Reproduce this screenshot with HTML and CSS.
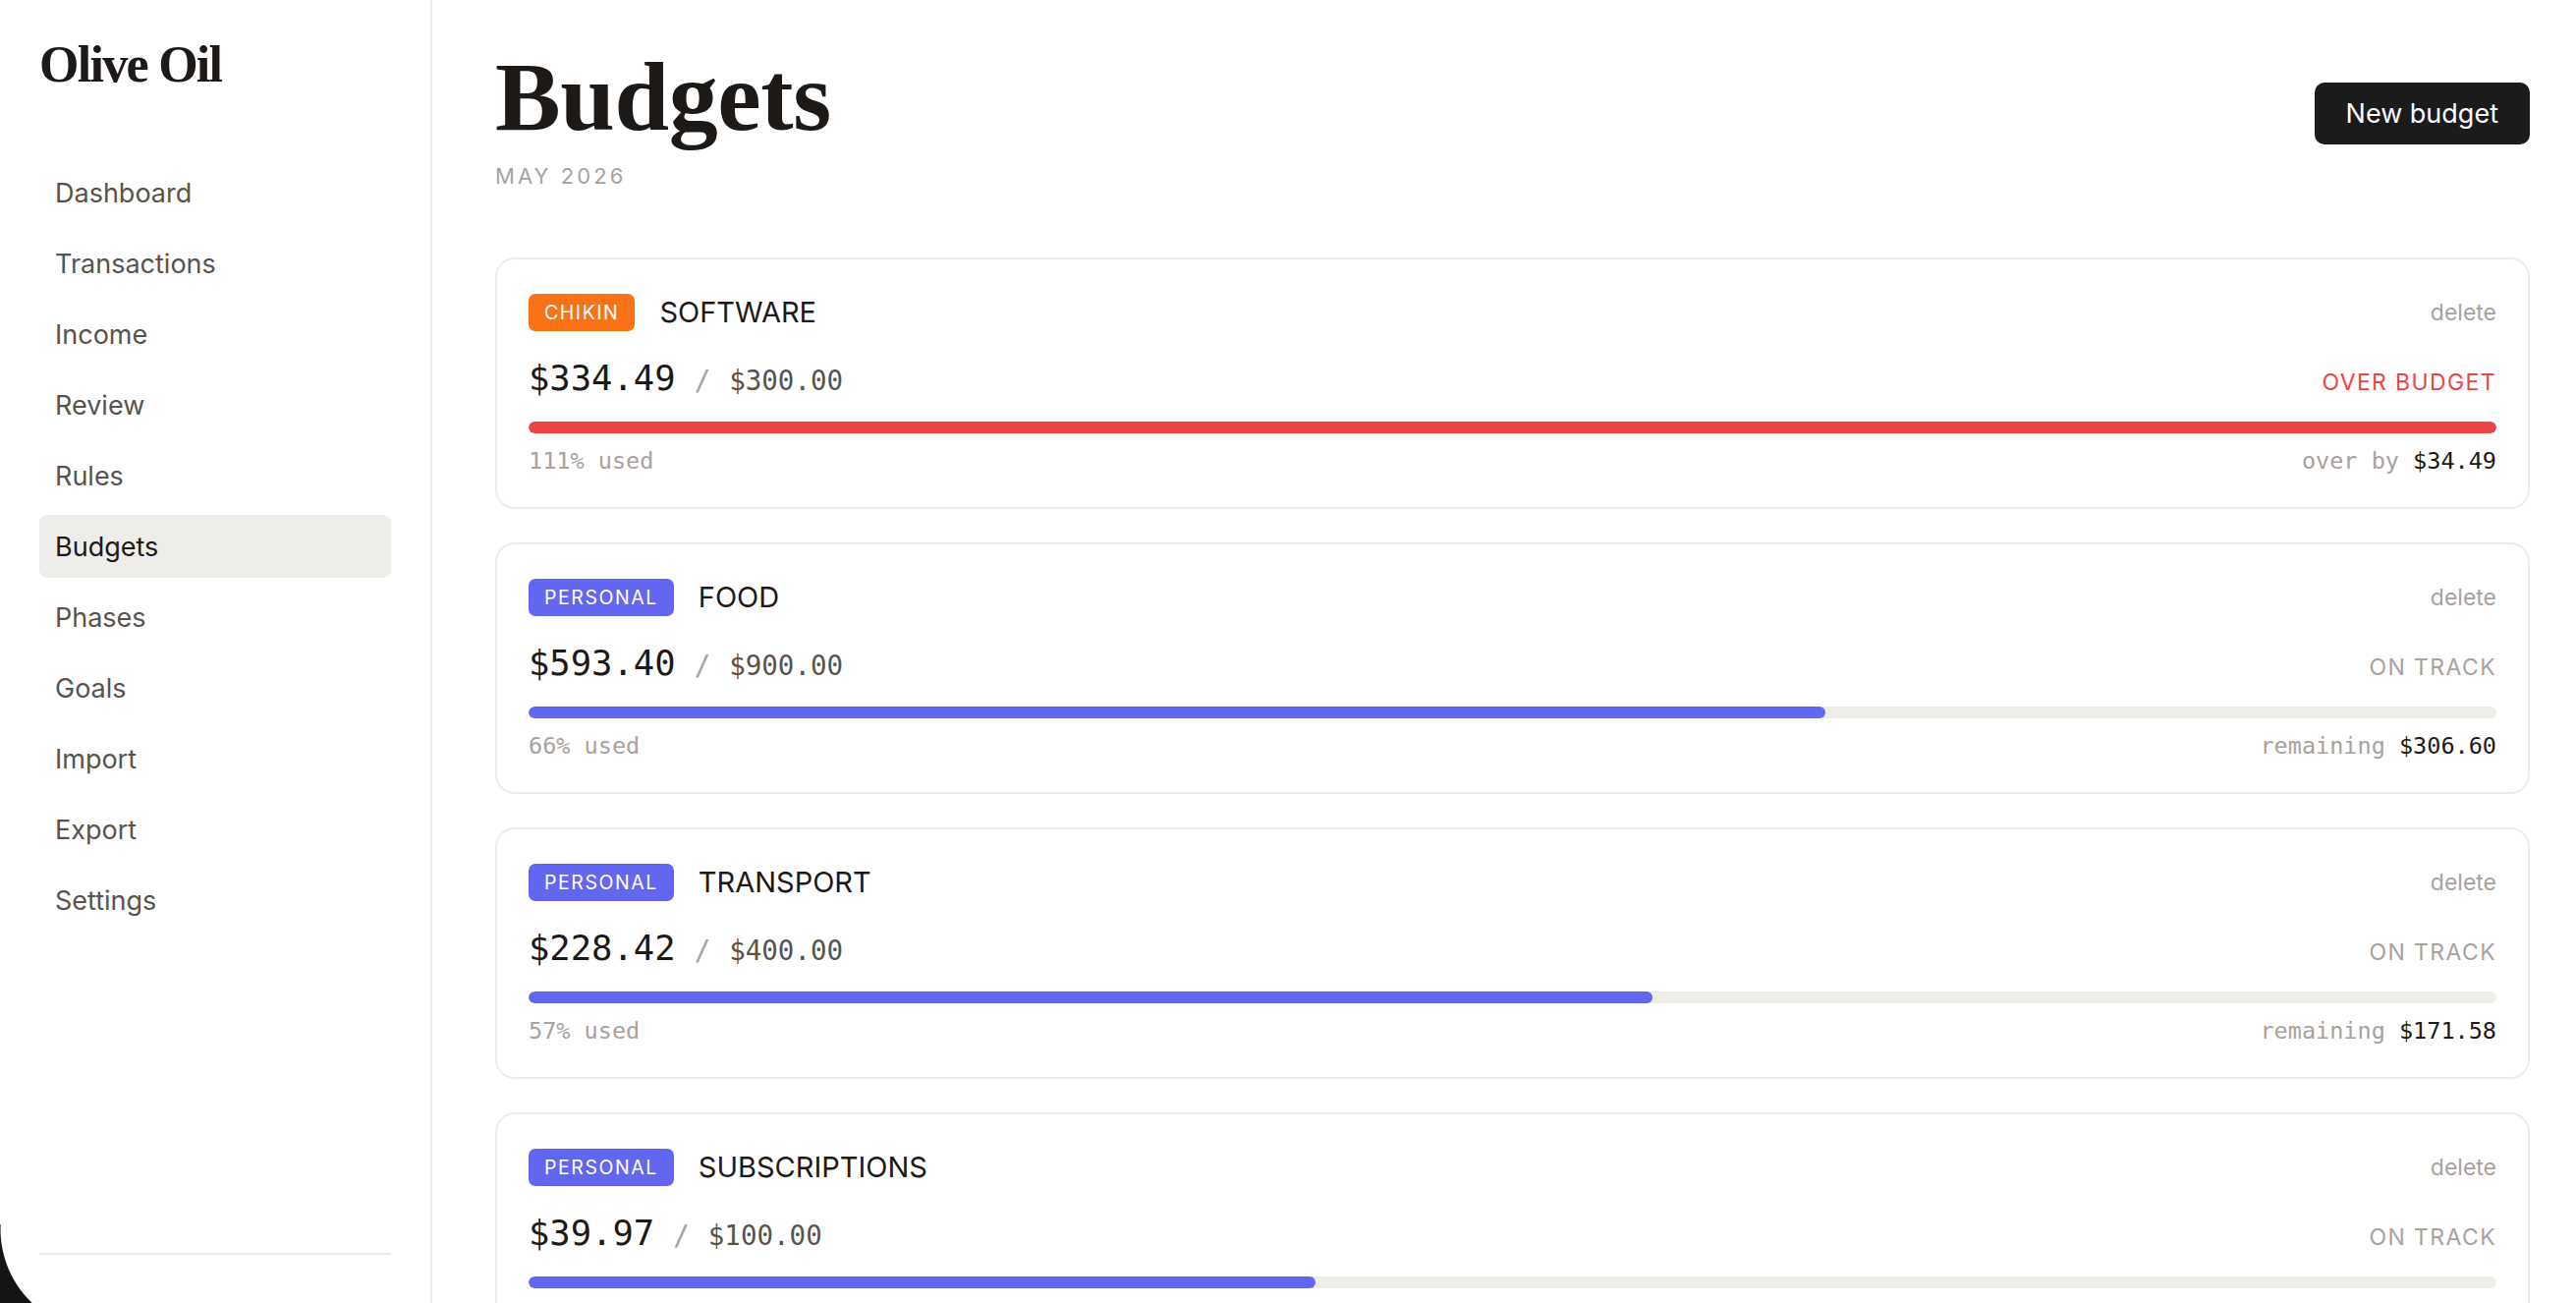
FILE: index.html
```html
<!DOCTYPE html>
<html lang="en">
<head>
    <meta charset="UTF-8">
    <meta name="viewport" content="width=device-width, initial-scale=1.0">
    <title>Budgets - Olive Oil</title>
    <link rel="stylesheet" href="styles.css">
</head>
<body>

    <div class="app">
        <aside class="sidebar">
            <div class="logo">Olive Oil</div>
            <nav class="nav">
                <a class="nav-item" href="#">Dashboard</a>
                <a class="nav-item" href="#">Transactions</a>
                <a class="nav-item" href="#">Income</a>
                <a class="nav-item" href="#">Review</a>
                <a class="nav-item" href="#">Rules</a>
                <a class="nav-item active" href="#">Budgets</a>
                <a class="nav-item" href="#">Phases</a>
                <a class="nav-item" href="#">Goals</a>
                <a class="nav-item" href="#">Import</a>
                <a class="nav-item" href="#">Export</a>
                <a class="nav-item" href="#">Settings</a>
            </nav>
            <div class="sidebar-footer"></div>
        </aside>

        <main class="main">
            <div class="page-header">
                <div>
                    <h1 class="page-title">Budgets</h1>
                    <div class="page-month">May 2026</div>
                </div>
                <button class="btn-primary">New budget</button>
            </div>

            <div class="budget-list">
                <!-- Software -->
                <div class="budget-card">
                    <div class="card-head">
                        <span class="tag tag-chikin">Chikin</span>
                        <span class="budget-name">Software</span>
                        <a class="delete-link" href="#">delete</a>
                    </div>
                    <div class="amount-row">
                        <div class="amounts">
                            <span class="spent">$334.49</span>
                            <span class="slash">/</span>
                            <span class="limit">$300.00</span>
                        </div>
                        <span class="status over">Over budget</span>
                    </div>
                    <div class="bar"><div class="bar-fill over" style="width: 100%"></div></div>
                    <div class="card-foot">
                        <span>111% used</span>
                        <span>over by <b>$34.49</b></span>
                    </div>
                </div>

                <!-- Food -->
                <div class="budget-card">
                    <div class="card-head">
                        <span class="tag tag-personal">Personal</span>
                        <span class="budget-name">Food</span>
                        <a class="delete-link" href="#">delete</a>
                    </div>
                    <div class="amount-row">
                        <div class="amounts">
                            <span class="spent">$593.40</span>
                            <span class="slash">/</span>
                            <span class="limit">$900.00</span>
                        </div>
                        <span class="status">On track</span>
                    </div>
                    <div class="bar"><div class="bar-fill" style="width: 65.9%"></div></div>
                    <div class="card-foot">
                        <span>66% used</span>
                        <span>remaining <b>$306.60</b></span>
                    </div>
                </div>

                <!-- Transport -->
                <div class="budget-card">
                    <div class="card-head">
                        <span class="tag tag-personal">Personal</span>
                        <span class="budget-name">Transport</span>
                        <a class="delete-link" href="#">delete</a>
                    </div>
                    <div class="amount-row">
                        <div class="amounts">
                            <span class="spent">$228.42</span>
                            <span class="slash">/</span>
                            <span class="limit">$400.00</span>
                        </div>
                        <span class="status">On track</span>
                    </div>
                    <div class="bar"><div class="bar-fill" style="width: 57.1%"></div></div>
                    <div class="card-foot">
                        <span>57% used</span>
                        <span>remaining <b>$171.58</b></span>
                    </div>
                </div>

                <!-- Subscriptions -->
                <div class="budget-card">
                    <div class="card-head">
                        <span class="tag tag-personal">Personal</span>
                        <span class="budget-name">Subscriptions</span>
                        <a class="delete-link" href="#">delete</a>
                    </div>
                    <div class="amount-row">
                        <div class="amounts">
                            <span class="spent">$39.97</span>
                            <span class="slash">/</span>
                            <span class="limit">$100.00</span>
                        </div>
                        <span class="status">On track</span>
                    </div>
                    <div class="bar"><div class="bar-fill" style="width: 40%"></div></div>
                    <div class="card-foot">
                        <span>40% used</span>
                        <span>remaining <b>$60.03</b></span>
                    </div>
                </div>
            </div>
        </main>
    </div>

    <div class="window-corner"></div>

</body>
</html>
```

FILE: styles.css
```css
* {
    box-sizing: border-box;
}
html, body {
    margin: 0;
    height: 100%;
    overflow: hidden;
}
body {
    font-family: Inter, "Noto Sans", sans-serif;
    color: #1c1917;
    background-color: #fff;
}
a {
    text-decoration: none;
    color: inherit;
}

.app {
    display: flex;
    height: 100vh;
}

/* sidebar */
.sidebar {
    width: 440px;
    flex-shrink: 0;
    height: 100vh;
    padding: 35px 40px 0;
    border-right: 2px solid #ececec;
    display: flex;
    flex-direction: column;
}
.logo {
    font-family: "Liberation Serif", serif;
    font-weight: bold;
    font-size: 52px;
    line-height: 1.2;
    letter-spacing: -0.033em;
    color: #1c1917;
}
.nav {
    margin-top: 67px;
    display: flex;
    flex-direction: column;
    gap: 8px;
}
.nav-item {
    height: 64px;
    display: flex;
    align-items: center;
    padding: 0 16px;
    border-radius: 8px;
    font-size: 27px;
    color: #57534e;
}
.nav-item.active {
    background-color: #eeede9;
    color: #1c1917;
}
.sidebar-footer {
    margin-top: auto;
    height: 51px;
    border-top: 2px solid #ececec;
}

/* main */
.main {
    flex: 1;
    padding: 44px 47px 0 64px;
    overflow: hidden;
}
.page-header {
    display: flex;
    justify-content: space-between;
    align-items: flex-start;
    margin-bottom: 68px;
}
.page-title {
    margin: 0;
    font-family: "Liberation Serif", serif;
    font-weight: bold;
    font-size: 100px;
    line-height: 1.1;
    letter-spacing: -0.004em;
    color: #1c1917;
}
.page-month {
    margin-top: 11px;
    font-size: 22px;
    line-height: 1.3;
    letter-spacing: 0.14em;
    text-transform: uppercase;
    color: #a8a29e;
}
.btn-primary {
    margin-top: 40px;
    height: 63px;
    padding: 0 32px;
    border: none;
    border-radius: 10px;
    background-color: #1c1b1b;
    color: #fff;
    font-family: Inter, sans-serif;
    font-size: 27px;
    cursor: pointer;
}

.budget-list {
    display: flex;
    flex-direction: column;
    gap: 34px;
}
.budget-card {
    border: 2px solid #ececec;
    border-radius: 20px;
    padding: 32px;
}
.card-head {
    height: 44px;
    display: flex;
    align-items: center;
}
.tag {
    height: 38px;
    line-height: 38px;
    padding: 0 16px;
    border-radius: 7px;
    font-size: 19.5px;
    letter-spacing: 0.08em;
    text-transform: uppercase;
    color: #fff;
}
.tag-chikin {
    background-color: #f97316;
}
.tag-personal {
    background-color: #6366f1;
}
.budget-name {
    margin-left: 25px;
    font-size: 29px;
    text-transform: uppercase;
    color: #1c1917;
}
.delete-link {
    margin-left: auto;
    font-size: 23px;
    color: #a8a29e;
}

.amount-row {
    margin-top: 24px;
    height: 42px;
    display: flex;
    justify-content: space-between;
    align-items: baseline;
}
.amounts {
    display: flex;
    align-items: baseline;
    font-family: "DejaVu Sans Mono", monospace;
}
.spent {
    font-size: 35.5px;
    line-height: 42px;
    color: #1c1917;
}
.slash {
    margin: 0 19px;
    font-size: 27.5px;
    color: #a8a29e;
}
.limit {
    font-size: 27.5px;
    color: #57534e;
}
.status {
    font-size: 23px;
    letter-spacing: 0.06em;
    text-transform: uppercase;
    color: #a8a29e;
}
.status.over {
    color: #ef4444;
}

.bar {
    margin-top: 23px;
    height: 12px;
    border-radius: 6px;
    background-color: #eeede9;
    overflow: hidden;
}
.bar-fill {
    height: 100%;
    border-radius: 6px;
    background-color: #6366f1;
}
.bar-fill.over {
    background-color: #ef4444;
}

.card-foot {
    margin-top: 14px;
    display: flex;
    justify-content: space-between;
    font-family: "DejaVu Sans Mono", monospace;
    font-size: 23.5px;
    line-height: 29px;
    color: #a8a29e;
}
.card-foot b {
    font-weight: normal;
    color: #1c1917;
}

/* rounded corner of the window frame */
.window-corner {
    position: fixed;
    left: 0;
    bottom: 0;
    width: 40px;
    height: 80px;
    background: radial-gradient(circle 104px at 104px 5px, transparent 99%, #141414 100%);
}
```
